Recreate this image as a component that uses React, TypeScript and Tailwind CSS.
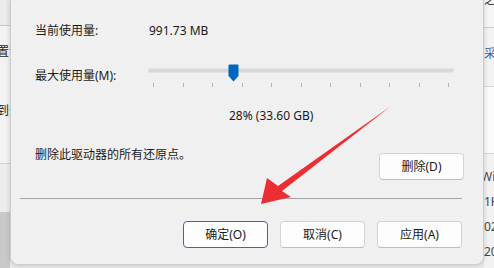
import React from "react";

const FONT = '"Noto Sans", "Noto Sans CJK SC", sans-serif';

function Btn({ label, primary }: { label: string; primary?: boolean }) {
  return (
    <div
      className={`flex h-[27px] w-[85px] items-center justify-center rounded-[4px] border bg-[#fdfdfd] text-[12px] text-[#1a1a1a] ${
        primary ? "border-[#2f6db0]" : "border-[#d3d3d3] border-b-[#bdbdbd]"
      }`}
    >
      {label}
    </div>
  );
}

function Slider() {
  const ticks = Array.from({ length: 11 });
  return (
    <div className="relative h-[24px] w-[306px]">
      {/* 轨道 */}
      <div className="mt-[4px] h-[5px] border border-[#e4e4e4] bg-[#d8d8d8]" />
      {/* 刻度 */}
      <div className="mt-[10px] flex justify-between px-[5px]">
        {ticks.map((_, i) => (
          <div key={i} className="h-[4px] w-px bg-[#b4b4b4]" />
        ))}
      </div>
      {/* 滑块 */}
      <svg className="absolute left-[80px] top-0" width="11" height="18" viewBox="0 0 11 18">
        <path d="M0.5 1.5 Q0.5 0.5 1.5 0.5 H9.5 Q10.5 0.5 10.5 1.5 V12 L5.5 17.5 L0.5 12 Z" fill="#0067c0" />
      </svg>
    </div>
  );
}

export default function App() {
  return (
    <div
      className="relative flex h-[268px] w-[494px] overflow-hidden bg-[#e9e9e9]"
      style={{ fontFamily: FONT }}
    >
      {/* 左侧背景窗口 */}
      <div className="flex w-[10px] shrink-0 flex-col overflow-hidden text-[12px] leading-[18px] text-[#222]">
        <div className="h-[26px] border-b border-[#c9c9c9] bg-[#ebebeb]" />
        <div className="h-[138px] border-b border-[#cfcfcf] bg-[#f3f3f3]">
          <div className="ml-[-3px] mt-[17px] whitespace-nowrap">置说</div>
          <div className="ml-[-3px] mt-[41px] whitespace-nowrap">到无</div>
        </div>
        <div className="h-[48px] bg-[#ededed]" />
        <div className="flex-1 bg-[#c9c9c9]" />
      </div>

      {/* 对话框 */}
      <div className="relative z-10 flex h-[265px] w-[474px] shrink-0 flex-col rounded-b-[8px] border-x border-b border-[#cdcdcd] bg-[#f0f0f0] pl-[24px] pr-[19px] text-[12px] leading-[18px] text-[#1a1a1a] shadow-[0_0_5px_rgba(0,0,0,0.18)]">
        <div className="mt-[22px] flex h-[18px]">
          <div className="w-[114px]">当前使用量:</div>
          <div>991.73 MB</div>
        </div>

        <div className="mt-[24px] flex h-[24px]">
          <div className="mt-[3px] w-[113px]">最大使用量(M):</div>
          <Slider />
        </div>

        <div className="ml-[194px] mt-[19px] h-[18px]">28% (33.60 GB)</div>

        <div className="mt-[21px] flex items-start justify-between">
          <div>删除此驱动器的所有还原点。</div>
          <div className="mt-[7px]">
            <Btn label="删除(D)" />
          </div>
        </div>

        <div className="ml-[-15px] mr-[2px] mt-[18px] h-px bg-[#a3a3a3]" />

        <div className="mr-[2px] mt-[22px] flex justify-end gap-[12px]">
          <Btn label="确定(O)" primary />
          <Btn label="取消(C)" />
          <Btn label="应用(A)" />
        </div>
      </div>

      {/* 右侧背景窗口 */}
      <div className="flex w-[10px] shrink-0 flex-col overflow-hidden text-[12px] leading-[18px] text-[#333]">
        <div className="h-[28px] border-b border-[#d0d0d0] bg-[#f6f6f6]">
          <div className="mt-[-9px] whitespace-nowrap">之行</div>
        </div>
        <div className="h-[59px] border-b border-[#d6d6d6] bg-[#f3f3f3]">
          <div className="mt-[17px] whitespace-nowrap text-[#2b5fa8]">采用</div>
        </div>
        <div className="h-[67px] border-b border-[#d6d6d6] bg-[#fafafa]" />
        <div className="flex-1 bg-[#f2f2f2] pt-[10px] leading-[25px] text-[#444]">
          <div className="ml-[-3px] whitespace-nowrap">Win</div>
          <div className="whitespace-nowrap">1H</div>
          <div className="whitespace-nowrap">02</div>
          <div className="whitespace-nowrap">20</div>
        </div>
      </div>

      {/* 红色箭头 */}
      <svg className="pointer-events-none absolute inset-0 z-20" width="494" height="268" viewBox="0 0 494 268">
        <polygon
          points="261,204 267,178 278,186 391,106 282,191 291,197"
          fill="#ec2d33"
        />
      </svg>
    </div>
  );
}
